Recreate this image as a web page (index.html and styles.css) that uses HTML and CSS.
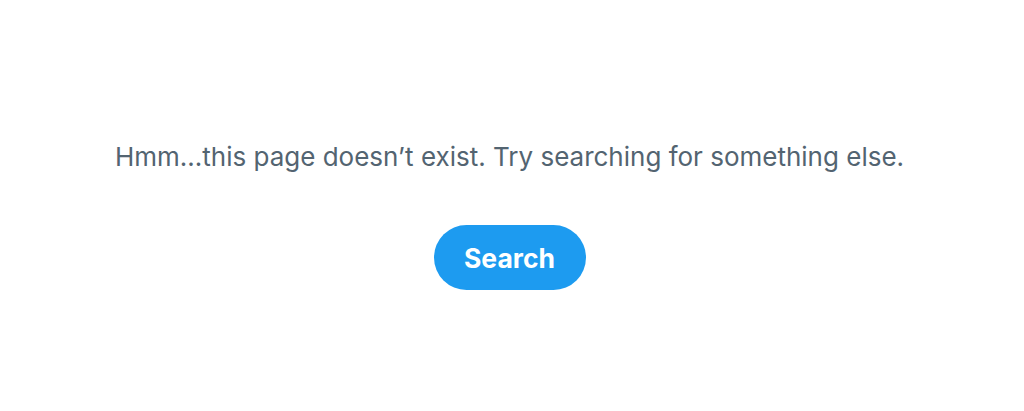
FILE: index.html
```html
<!DOCTYPE html>
<html>
<head>
<meta charset="utf-8">
<link rel="stylesheet" href="styles.css">
</head>
<body>
<main class="page">
  <p class="message">Hmm…this page doesn’t exist. Try searching for something else.</p>
  <button class="search-btn" type="button">Search</button>
</main>
</body>
</html>
```
FILE: styles.css
```css
html, body {
  margin: 0;
  padding: 0;
  background: #ffffff;
}
.page {
  display: flex;
  flex-direction: column;
  align-items: center;
  padding-top: 139px;
  padding-right: 5px;
  gap: 50px;
  font-family: Inter, Roboto, sans-serif;
}
.message {
  margin: 0;
  color: #536471;
  font-size: 26px;
  line-height: 36px;
  letter-spacing: 0;
}
.search-btn {
  border: none;
  background: #1d9bf0;
  color: #ffffff;
  font-family: Inter, Roboto, sans-serif;
  font-weight: 700;
  font-size: 26.5px;
  width: 152px;
  height: 65px;
  border-radius: 33px;
  padding: 0;
}
```
